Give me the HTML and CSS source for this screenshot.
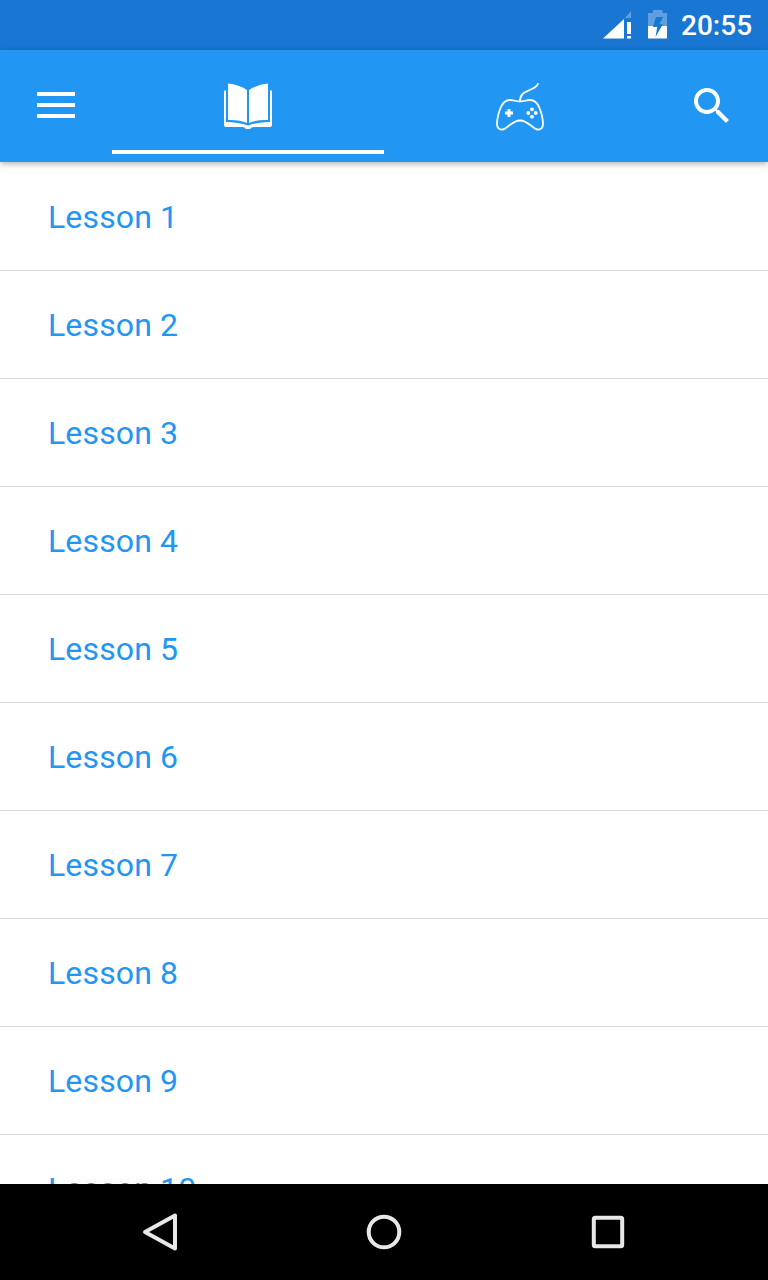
FILE: index.html
```html
<!DOCTYPE html>
<html lang="en">
<head>
<meta charset="utf-8">
<title>Lessons</title>
<link rel="stylesheet" href="styles.css">
</head>
<body>
<div class="screen">
  <div class="status">
    <svg class="signal" viewBox="0 0 30 30" width="30" height="30">
      <path class="faint" d="M21 9L28 1V8H21Z"/>
      <path class="solid" d="M0 28.500L21 9V28.500Z"/>
      <path class="solid" d="M24 12H28V24H24ZM24 26H28V28.500H24Z"/>
    </svg>
    <svg class="battery" viewBox="0 0 20 30" width="20" height="30">
      <path class="faint" d="M5 0H14.500V3H19V16H0V3H5Z"/>
      <path class="solid" d="M0 16H19V28.500H0Z"/>
      <path class="cut" d="M8 7H15L11.500 14H15L7.500 27L9.300 17H5Z"/>
    </svg>
    <span class="time">20:55</span>
  </div>
  <header class="toolbar">
    <div class="tool">
      <svg viewBox="0 0 48 48" width="48" height="48"><path class="solid" d="M5 10H43V14H5ZM5 21H43V25H5ZM5 32H43V36H5Z"/></svg>
    </div>
    <div class="tab tab-active">
      <svg viewBox="0 0 48 48" width="48" height="48">
        <path class="solid" d="M2 7H46Q48 7 48 9V42Q48 44 46 44H30Q27 44 26 46H22Q21 44 18 44H2Q0 44 0 42V9Q0 7 2 7Z"/>
        <path class="bar" d="M2 0H46V39Q34 39 24 42.500Q14 39 2 39Z"/>
        <path class="solid" d="M4 0.500Q15 1.500 23 7V40Q15 36.500 4 37Z"/>
        <path class="solid" d="M25 7Q33 1.500 44 0.500V37Q33 36.500 25 40Z"/>
      </svg>
      <span class="underline"></span>
    </div>
    <div class="tab">
      <svg viewBox="0 0 48 48" width="48" height="48">
        <path class="line" d="M14 17C18 17 20 18.500 24 18.500C28 18.500 30 17 34 17C39 17 41.500 20 43.500 25C45.500 30 47 36 47 41C47 45 44.500 47 41.500 46.500C37 46 32 37.500 24 37.500C16 37.500 11 46 6.500 46.500C3.500 47 1 45 1 41C1 36 2.500 30 4.500 25C6.500 20 9 17 14 17Z"/>
        <path class="line" d="M24 18C24 10 30 9 36 6C40 4 42 2 42 0"/>
        <path class="solid" d="M11.500 26H14.500V28.500H17V31.500H14.500V34H11.500V31.500H9V28.500H11.500Z"/>
        <circle class="solid" cx="36" cy="26.300" r="1.900"/>
        <circle class="solid" cx="36" cy="33.700" r="1.900"/>
        <circle class="solid" cx="32.300" cy="30" r="1.900"/>
        <circle class="solid" cx="39.700" cy="30" r="1.900"/>
      </svg>
    </div>
    <div class="tool">
      <svg viewBox="0 0 24 24" width="48" height="48"><path class="solid" d="M15.500 14h-.79l-.28-.27C15.410 12.590 16 11.110 16 9.500 16 5.910 13.090 3 9.500 3S3 5.910 3 9.500 5.910 16 9.500 16c1.610 0 3.090-.59 4.230-1.570l.27.28v.79l5 4.990L20.490 19l-4.990-5zm-6 0C7.010 14 5 11.990 5 9.500S7.010 5 9.500 5 14 7.010 14 9.500 11.990 14 9.500 14z"/></svg>
    </div>
  </header>
  <main class="list">
    <div class="row">Lesson 1</div>
    <div class="row">Lesson 2</div>
    <div class="row">Lesson 3</div>
    <div class="row">Lesson 4</div>
    <div class="row">Lesson 5</div>
    <div class="row">Lesson 6</div>
    <div class="row">Lesson 7</div>
    <div class="row">Lesson 8</div>
    <div class="row">Lesson 9</div>
    <div class="row">Lesson 10</div>
  </main>
  <nav class="nav">
    <svg viewBox="0 0 36 40" width="36" height="40"><path class="nav-line" d="M33 3.500V36.500L3 20Z"/></svg>
    <svg viewBox="0 0 40 40" width="40" height="40"><circle class="nav-line" cx="20" cy="20" r="15.300"/></svg>
    <svg viewBox="0 0 40 40" width="40" height="40"><rect class="nav-line" x="5.800" y="5.800" width="28.400" height="28.400" rx="1.500"/></svg>
  </nav>
</div>
</body>
</html>
```

FILE: styles.css
```css
* { box-sizing: border-box; }
html, body { margin: 0; padding: 0; }
body { font-family: Roboto, "Liberation Sans", sans-serif; background: #fff; }
svg { display: block; }
.screen { width: 768px; height: 1280px; display: flex; flex-direction: column; overflow: hidden; }
.solid { fill: #fff; }
.faint { fill: rgba(255, 255, 255, 0.3); }
.cut { fill: #1976d2; }
.bar { fill: #2196f3; }
.line { fill: none; stroke: #fff; stroke-width: 1.8; stroke-linecap: round; }

.status { height: 50px; flex: none; background: #1976d2; display: flex; align-items: center; justify-content: flex-end; padding-right: 17px; color: #fff; }
.signal { margin-right: 15px; }
.battery { margin-right: 13px; }
.time { font-size: 28px; font-weight: 500; line-height: 50px; padding-top: 2px; width: 70px; }

.toolbar { height: 112px; flex: none; background: #2196f3; display: flex; position: relative; z-index: 1; box-shadow: 0 2px 6px rgba(0, 0, 0, 0.3); }
.tool { width: 112px; display: flex; align-items: center; justify-content: center; }
.tab { flex: 1; display: flex; flex-direction: column; align-items: center; padding-top: 33px; }
.underline { width: 100%; height: 4px; margin-top: auto; margin-bottom: 8px; background: #fff; }

.list { flex: 1; min-height: 0; overflow: hidden; background: #fff; padding-top: 1px; }
.row { height: 108px; display: flex; align-items: center; padding-left: 48px; font-size: 32px; letter-spacing: 0.14px; color: #2196f3; border-bottom: 1px solid #dcdcdc; }

.nav { height: 96px; flex: none; background: #000; display: grid; grid-template-columns: repeat(3, 224px); padding: 0 48px; justify-items: center; align-items: center; }
.nav-line { fill: none; stroke: #e8e8e8; stroke-width: 4; stroke-linejoin: round; }
```
